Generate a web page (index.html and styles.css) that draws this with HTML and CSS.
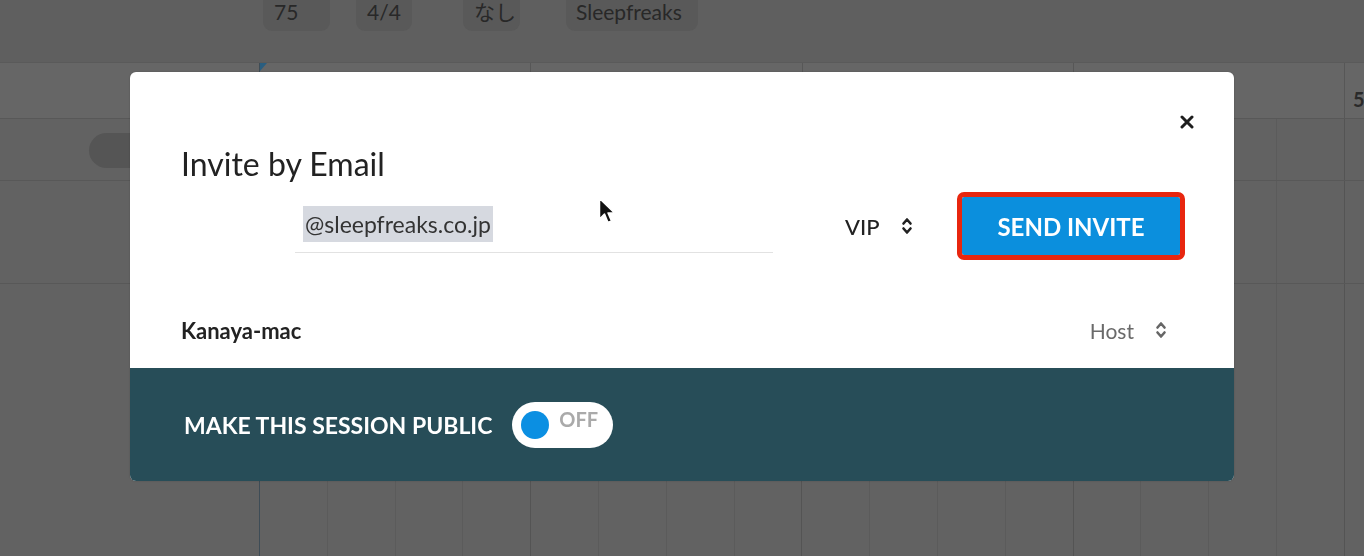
FILE: index.html
```html
<!DOCTYPE html>
<html lang="ja">
<head>
  <meta charset="UTF-8">
  <title>Invite by Email</title>
  <link rel="stylesheet" href="styles.css">
</head>
<body>
  <div class="app">
    <div class="topbar">
      <span class="chip chip-tempo">75</span>
      <span class="chip chip-sig">4/4</span>
      <span class="chip chip-key">なし</span>
      <span class="chip chip-owner">Sleepfreaks</span>
    </div>

    <div class="row ruler">
      <div class="track-head"></div>
      <div class="bars">
        <div class="bar"><span class="playhead"></span><span class="bar-num">1</span></div>
        <div class="bar"><span class="bar-num">2</span></div>
        <div class="bar"><span class="bar-num">3</span></div>
        <div class="bar"><span class="bar-num">4</span></div>
        <div class="bar bar-last"><span class="bar-num">5</span></div>
      </div>
    </div>

    <div class="row track track-1">
      <div class="track-head"><span class="track-pill"></span></div>
      <div class="bars grid"></div>
    </div>
    <div class="row track track-2">
      <div class="track-head"></div>
      <div class="bars grid"></div>
    </div>
    <div class="row track track-3">
      <div class="track-head"></div>
      <div class="bars grid"></div>
    </div>
  </div>

  <div class="backdrop">
    <div class="modal">
      <div class="modal-main">
        <div class="modal-top">
          <button class="close-btn" aria-label="Close">
            <svg width="14" height="14" viewBox="0 0 14 14"><path d="M2 2 L12 12 M12 2 L2 12" stroke="#1e1e1e" stroke-width="3" stroke-linecap="round"/></svg>
          </button>
        </div>
        <h2 class="modal-title">Invite by Email</h2>

        <div class="invite-row">
          <div class="email-field"><span class="email-selected">@sleepfreaks.co.jp</span></div>
          <div class="role-select">
            <span>VIP</span>
            <svg class="updown" width="12" height="20" viewBox="0 0 12 20"><path d="M2.5 7.5 L6 3.5 L9.5 7.5 M2.5 12.5 L6 16.5 L9.5 12.5" fill="none" stroke="#222" stroke-width="2.6" stroke-linecap="round" stroke-linejoin="round"/></svg>
          </div>
          <button class="send-btn">SEND INVITE</button>
        </div>

        <div class="member-row">
          <span class="member-name">Kanaya-mac</span>
          <div class="role-select role-host">
            <span>Host</span>
            <svg class="updown" width="12" height="20" viewBox="0 0 12 20"><path d="M2.5 7.5 L6 3.5 L9.5 7.5 M2.5 12.5 L6 16.5 L9.5 12.5" fill="none" stroke="#666" stroke-width="2.6" stroke-linecap="round" stroke-linejoin="round"/></svg>
          </div>
        </div>
      </div>

      <div class="modal-footer">
        <span class="public-label">MAKE THIS SESSION PUBLIC</span>
        <div class="toggle">
          <span class="toggle-knob"></span>
          <span class="toggle-text">OFF</span>
        </div>
      </div>
    </div>

    <svg class="pointer" width="18" height="28" viewBox="0 0 18 28">
      <path d="M1.5 1.5 L1.5 22 L6.5 17 L10 25.5 L13.5 24 L10 16 L16.5 16 Z" fill="#111" stroke="#fff" stroke-width="1.5" stroke-linejoin="round"/>
    </svg>
  </div>
</body>
</html>
```

FILE: styles.css
```css
* {
  box-sizing: border-box;
}

body {
  margin: 0;
  width: 1364px;
  height: 556px;
  overflow: hidden;
  background: #626262;
  font-family: "Lato", "Noto Sans CJK JP", sans-serif;
}

/* background app, already dimmed */

.app {
  display: flex;
  flex-direction: column;
  height: 100%;
}

.topbar {
  height: 62px;
  background: #5f5f5f;
  display: flex;
  align-items: flex-start;
  padding-left: 263px;
}

.chip {
  height: 31px;
  background: #595959;
  border-radius: 0 0 9px 9px;
  color: #282828;
  font-size: 21px;
  font-weight: 400;
  line-height: 24px;
  padding-left: 11px;
}

.chip-tempo { width: 67px; }
.chip-sig { width: 56px; margin-left: 26px; }
.chip-key { width: 57px; margin-left: 51px; }
.chip-owner { width: 132px; margin-left: 46px; padding-left: 10px; }

.row {
  display: flex;
  border-top: 1px solid #585858;
}

.track-head {
  width: 260px;
  flex-shrink: 0;
  border-right: 1px solid #3e4c56;
}

.bars {
  flex: 1;
  display: flex;
  overflow: hidden;
}

.ruler {
  height: 56px;
  background: #666;
  border-top-color: #5a5a5a;
}

.bar {
  width: 271.25px;
  flex-shrink: 0;
  border-right: 1px solid #575757;
  position: relative;
}

.bar-last {
  width: auto;
  flex: 1;
  border-right: 0;
}

.bar-num {
  display: block;
  padding: 24px 0 0 8px;
  font-size: 20px;
  font-weight: 700;
  color: #2a2a2a;
}

.playhead {
  position: absolute;
  left: 0;
  top: 0;
  border-top: 8px solid #2a5e80;
  border-right: 7px solid transparent;
}

.grid {
  background-image:
    repeating-linear-gradient(to right, transparent 0, transparent 270.25px, #545454 270.25px, #545454 271.25px),
    repeating-linear-gradient(to right, transparent 0, transparent 66.8px, #5b5b5b 66.8px, #5b5b5b 67.8px);
}

.track-1 { height: 62px; }
.track-2 { height: 103px; }
.track-3 { flex: 1; }

.track-1 .track-head {
  padding: 14px 0 0 89px;
}

.track-pill {
  display: block;
  width: 70px;
  height: 35px;
  border-radius: 18px;
  background: #555;
}

/* modal */

.backdrop {
  position: fixed;
  inset: 0;
  display: flex;
  align-items: center;
  justify-content: center;
  padding-bottom: 3px;
}

.modal {
  width: 1104px;
  background: #fff;
  border-radius: 6px;
  overflow: hidden;
  box-shadow: 0 0 2px rgba(0, 0, 0, 0.2);
}

.modal-main {
  height: 296px;
  padding: 43px 40px 0 51px;
}

.modal-top {
  display: flex;
  justify-content: flex-end;
  height: 14px;
}

.close-btn {
  border: 0;
  background: none;
  padding: 0;
  width: 14px;
  height: 14px;
  display: block;
}

.modal-title {
  margin: 17px 0 0;
  font-size: 32px;
  line-height: 36px;
  font-weight: 400;
  color: #222;
}

.invite-row {
  display: flex;
  align-items: center;
  height: 58px;
  margin: 15px 14px 0 114px;
}

.email-field {
  width: 478px;
  height: 47px;
  align-self: flex-end;
  margin-bottom: 2px;
  border-bottom: 1px solid #e2e2e2;
  padding-left: 8px;
}

.email-selected {
  display: inline-block;
  background: #d6d9e0;
  padding: 0 2px;
  font-size: 23px;
  line-height: 36px;
  color: #333;
}

.role-select {
  display: flex;
  align-items: center;
  gap: 21px;
  font-size: 22px;
  font-weight: 500;
  color: #222;
}

.invite-row .role-select {
  margin-left: 72px;
}

.send-btn {
  margin-left: auto;
  width: 218px;
  height: 58px;
  border: 0;
  border-radius: 2px;
  background: #0b8fdd;
  color: #fff;
  font-family: inherit;
  font-size: 24px;
  font-weight: 700;
  outline: 5px solid #e8260f;
  outline-offset: 0;
}

.member-row {
  display: flex;
  align-items: center;
  justify-content: space-between;
  height: 28px;
  margin: 61px 27px 0 0;
}

.member-name {
  font-size: 22px;
  font-weight: 700;
  color: #222;
}

.role-host {
  font-size: 21px;
  font-weight: 400;
  color: #6a6a6a;
}

.modal-footer {
  height: 113px;
  background: #274d58;
  display: flex;
  align-items: center;
  padding: 0 0 0 54px;
}

.public-label {
  color: #fff;
  font-size: 23px;
  font-weight: 700;
}

.toggle {
  margin-left: 20px;
  width: 101px;
  height: 46px;
  border-radius: 23px;
  background: #fff;
  display: flex;
  align-items: center;
  padding-left: 9px;
}

.toggle-knob {
  width: 28px;
  height: 28px;
  border-radius: 50%;
  background: #0b8fe2;
}

.toggle-text {
  margin: 0 0 12px 10px;
  font-size: 20px;
  font-weight: 700;
  color: #aaa;
}

.pointer {
  position: absolute;
  left: 598px;
  top: 197px;
}
```
